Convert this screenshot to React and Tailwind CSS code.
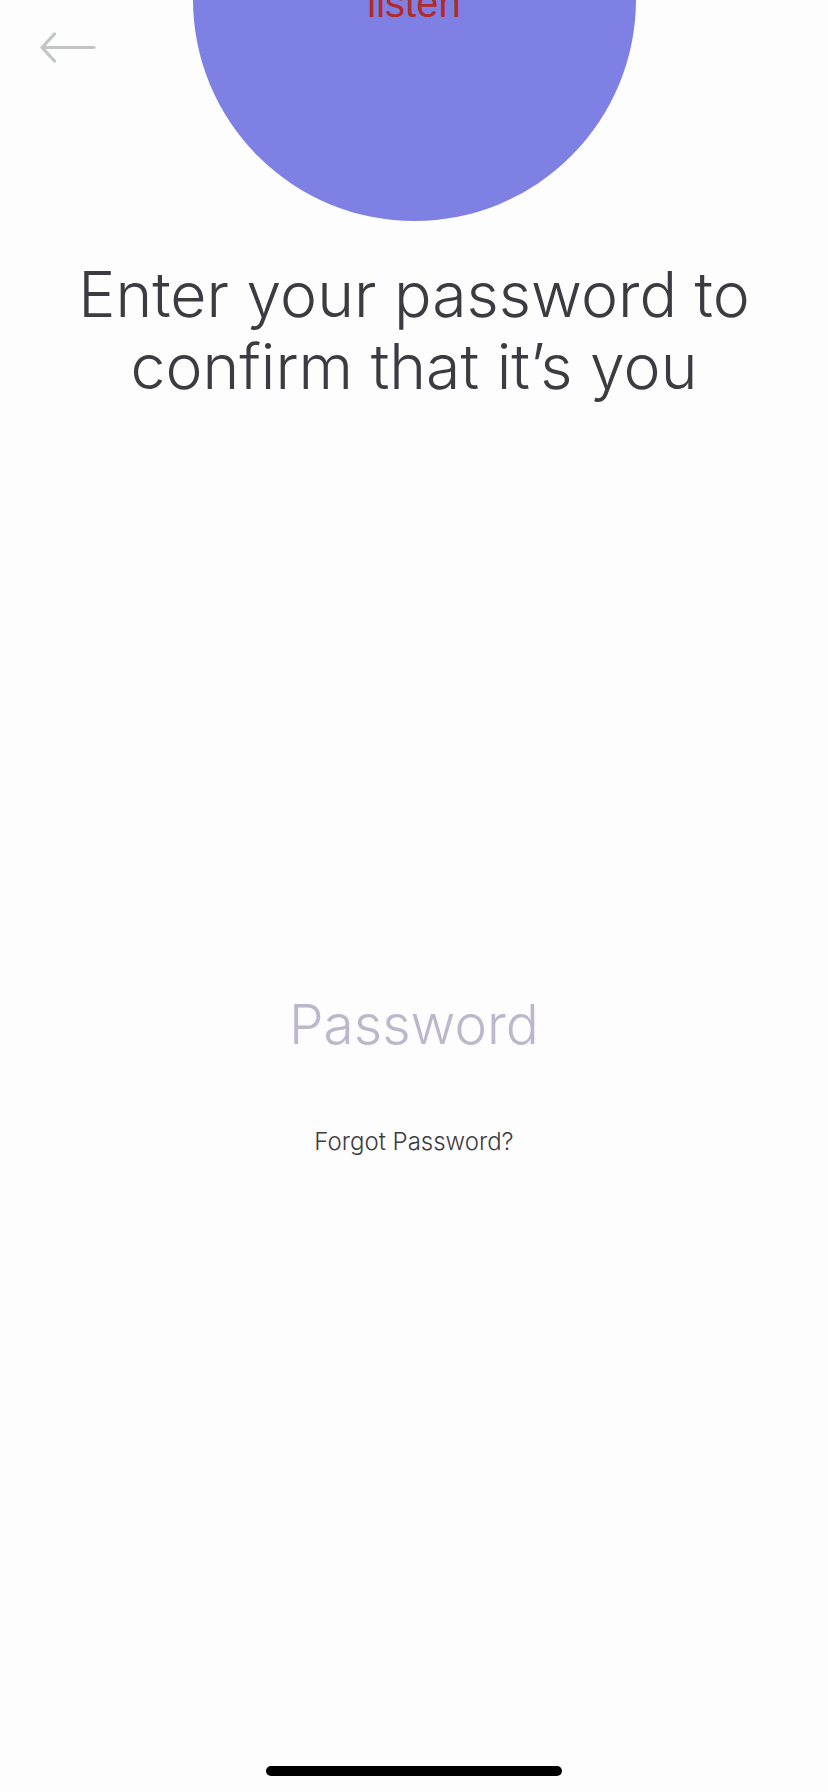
import { useState } from 'react';

function BackArrow() {
  return (
    <svg width="58" height="32" viewBox="0 0 58 32" fill="none">
      <path
        d="M55 15.5H3M15.5 2L3 15.5L15.5 29"
        stroke="#c1c5c4"
        strokeWidth="3.2"
        strokeLinecap="round"
        strokeLinejoin="round"
      />
    </svg>
  );
}

export default function App() {
  const [password, setPassword] = useState('');

  return (
    <div className="relative min-h-[1792px] w-full overflow-hidden bg-[#fdfdfd] font-['Inter',sans-serif]">
      {/* Back button */}
      <button className="absolute left-[39px] top-[32px]">
        <BackArrow />
      </button>

      {/* Avatar circle */}
      <div className="mx-auto -mt-[222px] flex h-[443px] w-[443px] items-center justify-center rounded-full bg-[#7f80e3]">
        <span className="pt-[6px] text-[40px] leading-none text-[#b22a2a] font-['Liberation_Sans',sans-serif]">
          listen
        </span>
      </div>

      {/* Title */}
      <h1 className="mt-[37px] px-6 text-center text-[62.5px] font-light leading-[72px] text-[#3d3b42]">
        Enter your password to
        <br />
        confirm that it’s you
      </h1>

      {/* Password */}
      <div className="mt-[590px] flex flex-col items-center">
        <input
          type="password"
          value={password}
          onChange={(e) => setPassword(e.target.value)}
          placeholder="Password"
          className="w-[600px] bg-transparent text-center text-[55px] font-light leading-[64px] text-[#3d3b42] placeholder:text-[#bdb7cc] outline-none"
        />
        <button className="mt-[68px] text-[24px] font-light text-[#3d3b42]">
          Forgot Password?
        </button>
      </div>

      {/* Home indicator */}
      <div className="absolute bottom-[16px] left-1/2 h-[10px] w-[296px] -translate-x-1/2 rounded-full bg-black" />
    </div>
  );
}
